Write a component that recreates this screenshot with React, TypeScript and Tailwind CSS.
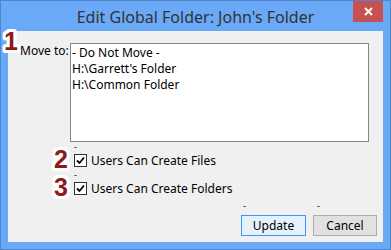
import React from "react";

const outline =
  "3px 0 0 #fff, -3px 0 0 #fff, 0 3px 0 #fff, 0 -3px 0 #fff, 2px 2px 0 #fff, -2px -2px 0 #fff, 2px -2px 0 #fff, -2px 2px 0 #fff, 3px 2px 0 #fff, -3px 2px 0 #fff, 3px -2px 0 #fff, -3px -2px 0 #fff, 2px 3px 0 #fff, -2px 3px 0 #fff, 2px -3px 0 #fff, -2px -3px 0 #fff";

function Badge({ n }: { n: string }) {
  return (
    <span
      className="font-['Liberation_Sans',Arial,sans-serif] text-[25px] font-bold leading-none text-[#8f1a1a]"
      style={{ textShadow: outline }}
    >
      {n}
    </span>
  );
}

function Check({ label }: { label: string }) {
  return (
    <div className="flex h-[13px] items-center gap-[4px]">
      <span className="flex h-[13px] w-[13px] items-center justify-center border border-[#333] bg-white">
        <svg width="9" height="9" viewBox="0 0 9 9">
          <path d="M1 4.5 L3.5 7 L8 1.5" fill="none" stroke="#000" strokeWidth="1.8" />
        </svg>
      </span>
      <span className="text-[12px] leading-[13px] text-black">{label}</span>
    </div>
  );
}

function Tick() {
  return <span className="block h-[9px] text-[9px] leading-[4px] text-black">-</span>;
}

export default function App() {
  return (
    <div className="relative h-[250px] w-[391px] border border-[#4d86c9] bg-[#6aa9f7] font-['Noto_Sans',sans-serif]">
      <div className="flex h-[30px] items-center justify-center">
        <span className="pt-[1px] text-[16px] text-[#333]">Edit Global Folder: John's Folder</span>
        <div className="absolute right-[7px] top-0 flex h-[21px] w-[30px] items-center justify-center bg-[#c75050]">
          <svg width="9" height="9" viewBox="0 0 9 9">
            <path d="M1 1 L8 8 M8 1 L1 8" stroke="#fff" strokeWidth="2" />
          </svg>
        </div>
      </div>
      <div className="mx-[7px] flex h-[211px] flex-col bg-[#f0f0f0] pl-[12px] pr-[6px] pt-[12px]">
        <div className="flex">
          <span className="w-[50px] text-[12px] leading-[16px] text-black">Move to:</span>
          <div className="h-[99px] w-[299px] border border-[#828790] bg-white px-[1px] pt-[1px] text-[12px] leading-[16px] text-black">
            <div>- Do Not Move -</div>
            <div>H:\Garrett's Folder</div>
            <div>H:\Common Folder</div>
          </div>
        </div>
        <div className="ml-[54px] mt-[3px] flex flex-col">
          <Tick />
          <Check label="Users Can Create Files" />
          <div className="mt-[6px]">
            <Tick />
          </div>
          <Check label="Users Can Create Folders" />
        </div>
        <div className="mt-auto mb-[6px] flex justify-end gap-[7px]">
          <div className="relative">
            <span className="absolute left-[2px] top-[-8px] text-[9px] leading-[4px] text-black">-</span>
            <button className="h-[21px] w-[65px] border border-[#3c99fc] bg-[#e5f1fb] text-[12px] text-black">Update</button>
          </div>
          <div className="relative">
            <span className="absolute left-[4px] top-[-8px] text-[9px] leading-[4px] text-black">-</span>
            <button className="h-[21px] w-[64px] border border-[#adadad] bg-[#e1e1e1] text-[12px] text-black">Cancel</button>
          </div>
        </div>
      </div>
      <div className="absolute left-[3px] top-[28px]"><Badge n="1" /></div>
      <div className="absolute left-[53px] top-[146px]"><Badge n="2" /></div>
      <div className="absolute left-[53px] top-[174px]"><Badge n="3" /></div>
    </div>
  );
}
